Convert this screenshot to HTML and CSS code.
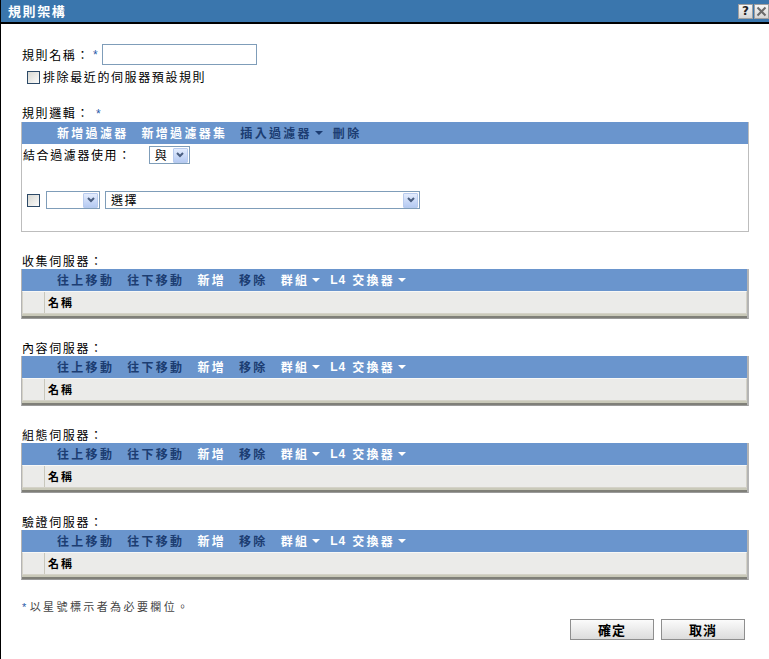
FILE: index.html
```html
<!DOCTYPE html>
<html lang="zh-Hant">
<head>
<meta charset="utf-8">
<title>規則架構</title>
<link rel="stylesheet" href="styles.css">
</head>
<body>
<div class="dialog">
  <div class="titlebar">
    <span class="title">規則架構</span>
    <div class="tbtns">
      <span class="tbtn help">?</span>
      <span class="tbtn close"><svg width="11" height="11" viewBox="0 0 11 11"><path d="M1.5 1.5 L9.5 9.5 M9.5 1.5 L1.5 9.5" stroke="#6a6a6a" stroke-width="2"/></svg></span>
    </div>
  </div>

  <div class="content">
    <div class="name-row">
      <span class="lbl">規則名稱：</span><span class="req">*</span>
      <span class="text-input"></span>
    </div>
    <div class="chk-row">
      <span class="chk"></span><span class="lbl">排除最近的伺服器預設規則</span>
    </div>

    <div class="sec-label first">規則邏輯：<span class="req">*</span></div>
    <div class="filter-box">
      <div class="toolbar">
        <span class="tb light">新增過濾器</span>
        <span class="tb light">新增過濾器集</span>
        <span class="tb dark">插入過濾器<i class="tri"></i></span>
        <span class="tb dark">刪除</span>
      </div>
      <div class="combine">
        <span class="lbl">結合過濾器使用：</span>
        <span class="select sel-and"><span class="val">與</span><span class="arrow"><svg width="10" height="8" viewBox="0 0 10 8"><path d="M2 2 L5 5 L8 2" fill="none" stroke="#4a5e80" stroke-width="2"/></svg></span></span>
      </div>
      <div class="filter-row">
        <span class="chk"></span>
        <span class="select sel-op"><span class="val"></span><span class="arrow"><svg width="10" height="8" viewBox="0 0 10 8"><path d="M2 2 L5 5 L8 2" fill="none" stroke="#4a5e80" stroke-width="2"/></svg></span></span>
        <span class="select sel-choose"><span class="val">選擇</span><span class="arrow"><svg width="10" height="8" viewBox="0 0 10 8"><path d="M2 2 L5 5 L8 2" fill="none" stroke="#4a5e80" stroke-width="2"/></svg></span></span>
      </div>
    </div>

    <div class="sec-label">收集伺服器：</div>
    <div class="server-box">
      <div class="toolbar">
        <span class="tb dark">往上移動</span>
        <span class="tb dark">往下移動</span>
        <span class="tb light">新增</span>
        <span class="tb dark">移除</span>
        <span class="tb light">群組<i class="tri"></i></span>
        <span class="tb light"><span class="lat">L4</span>交換器<i class="tri"></i></span>
      </div>
      <div class="grid-head"><span class="gcell-sel"></span><span class="gcell-name">名稱</span></div>
      <div class="grid-bottom"></div>
    </div>

    <div class="sec-label">內容伺服器：</div>
    <div class="server-box">
      <div class="toolbar">
        <span class="tb dark">往上移動</span>
        <span class="tb dark">往下移動</span>
        <span class="tb light">新增</span>
        <span class="tb dark">移除</span>
        <span class="tb light">群組<i class="tri"></i></span>
        <span class="tb light"><span class="lat">L4</span>交換器<i class="tri"></i></span>
      </div>
      <div class="grid-head"><span class="gcell-sel"></span><span class="gcell-name">名稱</span></div>
      <div class="grid-bottom"></div>
    </div>

    <div class="sec-label">組態伺服器：</div>
    <div class="server-box">
      <div class="toolbar">
        <span class="tb dark">往上移動</span>
        <span class="tb dark">往下移動</span>
        <span class="tb light">新增</span>
        <span class="tb dark">移除</span>
        <span class="tb light">群組<i class="tri"></i></span>
        <span class="tb light"><span class="lat">L4</span>交換器<i class="tri"></i></span>
      </div>
      <div class="grid-head"><span class="gcell-sel"></span><span class="gcell-name">名稱</span></div>
      <div class="grid-bottom"></div>
    </div>

    <div class="sec-label">驗證伺服器：</div>
    <div class="server-box">
      <div class="toolbar">
        <span class="tb dark">往上移動</span>
        <span class="tb dark">往下移動</span>
        <span class="tb light">新增</span>
        <span class="tb dark">移除</span>
        <span class="tb light">群組<i class="tri"></i></span>
        <span class="tb light"><span class="lat">L4</span>交換器<i class="tri"></i></span>
      </div>
      <div class="grid-head"><span class="gcell-sel"></span><span class="gcell-name">名稱</span></div>
      <div class="grid-bottom"></div>
    </div>

    <div class="footnote"><span class="req">*</span>以星號標示者為必要欄位。</div>
    <div class="buttons">
      <span class="btn">確定</span>
      <span class="btn">取消</span>
    </div>
  </div>
</div>
</body>
</html>
```

FILE: styles.css
```css
* { box-sizing: border-box; }

body {
  margin: 0;
  background: #fff;
  color: #000;
  font-family: "Noto Sans CJK TC", "Noto Sans", sans-serif;
  font-size: 12px;
  line-height: 16px;
}

.dialog {
  width: 769px;
  height: 659px;
  border-left: 1px solid #000;
  overflow: hidden;
}

.titlebar {
  height: 24px;
  background: #3a76ad;
  border-bottom: 2px solid #000;
  display: flex;
  justify-content: space-between;
  align-items: center;
  padding-left: 7px;
}

.title {
  color: #fff;
  font-weight: bold;
  font-size: 13px;
  letter-spacing: 1.6px;
  line-height: 22px;
}

.tbtns {
  display: flex;
  gap: 1px;
  align-self: flex-start;
  margin-top: 4px;
}

.tbtn {
  width: 15px;
  height: 15px;
  background: linear-gradient(#f6f6f6, #d6d6d6);
  border: 1px solid #a0a0a0;
  display: flex;
  align-items: center;
  justify-content: center;
}

.tbtn.help {
  font-family: "DejaVu Sans", sans-serif;
  font-weight: bold;
  font-size: 12px;
  color: #222;
  line-height: 13px;
}

.content {
  padding: 20px 20px 0 20px;
}

.lbl { letter-spacing: 1.6px; }

.req {
  color: #2a5aa8;
  font-family: "Liberation Sans", sans-serif;
}

.name-row {
  display: flex;
  align-items: center;
  height: 21px;
  padding-left: 1px;
}

.name-row .req { margin: 0 4px 0 3px; }

.text-input {
  width: 155px;
  height: 21px;
  border: 1px solid #7f9db9;
  background: #fff;
}

.chk-row {
  display: flex;
  align-items: center;
  margin-top: 4px;
  padding-left: 6px;
  height: 16px;
}

.chk {
  width: 13px;
  height: 13px;
  border: 1px solid #2d4a68;
  background: linear-gradient(135deg, #d8d8d2, #fbfbfb);
  margin-right: 3px;
  flex: none;
}

.sec-label {
  margin-top: 21px;
  padding-left: 1px;
  letter-spacing: 1.6px;
  line-height: 16px;
}

.sec-label.first { margin-top: 20px; }
.sec-label .req { margin-left: 6px; }

.toolbar {
  height: 22px;
  background: #6a95cd;
  display: flex;
  align-items: center;
  padding-left: 35px;
  gap: 13px;
}

.tb {
  font-weight: bold;
  font-size: 12px;
  letter-spacing: 2.3px;
  display: flex;
  align-items: center;
  white-space: nowrap;
}

.tb.light { color: #fff; }
.tb.dark { color: #1c3d72; }

.lat {
  font-family: "Liberation Sans", sans-serif;
  letter-spacing: 1px;
  margin-right: 6px;
}

.tri {
  display: inline-block;
  width: 0;
  height: 0;
  border-left: 4px solid transparent;
  border-right: 4px solid transparent;
  border-top: 4px solid currentColor;
  margin-left: 3px;
  margin-right: -3px;
}

.filter-box {
  border: 1px solid #bdbdbd;
  border-top: none;
  padding-bottom: 22px;
}

.combine {
  display: flex;
  align-items: center;
  margin-top: 2px;
  padding-left: 1px;
}

.select {
  display: flex;
  align-items: center;
  height: 18px;
  border: 1px solid #7f9db9;
  background: #fff;
  padding-right: 1px;
}

.select .val {
  flex: 1;
  padding-left: 5px;
  line-height: 16px;
  letter-spacing: 1.6px;
}

.select .arrow {
  width: 15px;
  height: 15px;
  background: linear-gradient(#e3ecfd, #b5caf2);
  border: 1px solid #b8cbee;
  border-radius: 1px;
  display: flex;
  align-items: center;
  justify-content: center;
}

.sel-and { width: 41px; margin-left: 17px; }
.sel-op { width: 54px; margin-left: 6px; }
.sel-choose { width: 315px; margin-left: 5px; }

.filter-row {
  display: flex;
  align-items: center;
  margin-top: 27px;
  padding-left: 5px;
}

.filter-row .chk { margin-right: 0; }

.server-box {
  border-left: 1px solid #b4b4b4;
  border-right: 2px solid #b4b4b4;
  border-bottom: 1px solid #9a9a9a;
}

.server-box .toolbar { padding-left: 35px; }

.grid-head {
  height: 23px;
  background: #ebebe9;
  border: 1px solid #d4d2c8;
  border-top-color: #f8f8f6;
  display: flex;
}

.gcell-sel {
  width: 22px;
  border-right: 1px solid #c8c7bc;
}

.gcell-name {
  padding-left: 3px;
  font-weight: bold;
  font-size: 11px;
  letter-spacing: 2px;
  line-height: 21px;
}

.grid-bottom {
  height: 4px;
  border-top: 2px solid #c9c9b9;
  background: #7f7f78;
}

.footnote {
  margin-top: 19px;
  padding-left: 1px;
  font-size: 11px;
  color: #444;
  letter-spacing: 2.4px;
  line-height: 14px;
}

.footnote .req { margin-right: 1px; }

.buttons {
  display: flex;
  justify-content: flex-end;
  gap: 7px;
  margin-top: 5px;
  padding-right: 4px;
}

.btn {
  width: 84px;
  height: 21px;
  border: 1px solid #8e8e8e;
  background: linear-gradient(#fbfbfb, #dcdcdc);
  display: flex;
  align-items: center;
  justify-content: center;
  font-weight: bold;
  font-size: 13px;
  letter-spacing: 1px;
}
```
